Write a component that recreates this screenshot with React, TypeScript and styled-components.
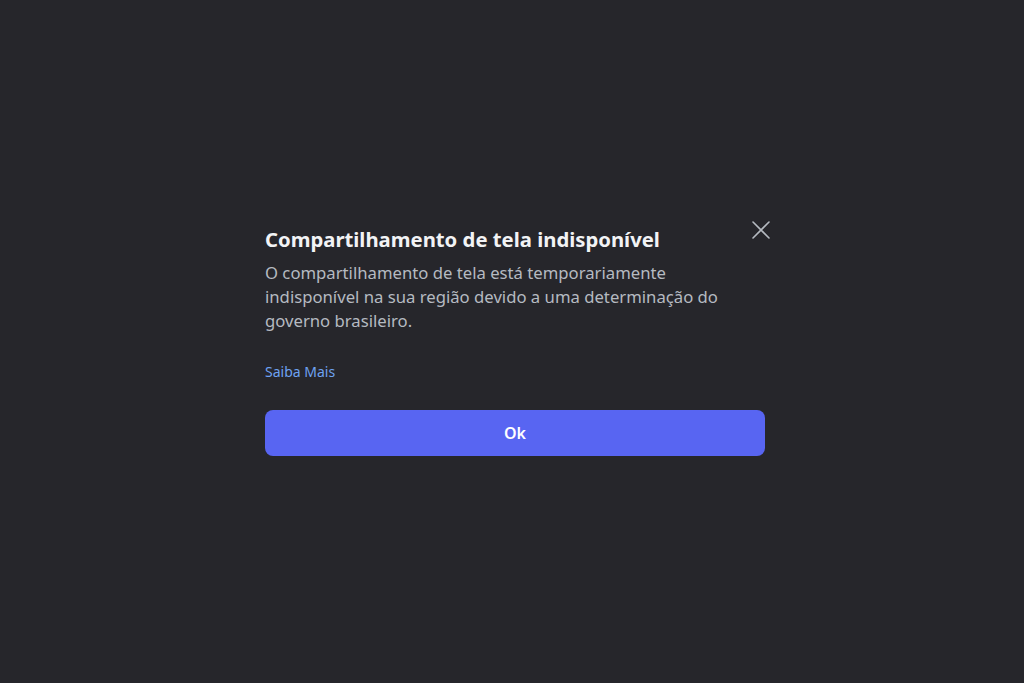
import React from "react";
import styled, { createGlobalStyle } from "styled-components";

const Global = createGlobalStyle`
  html, body {
    margin: 0;
    padding: 0;
    height: 100%;
    background: #26262b;
  }
  #root {
    height: 100%;
  }
`;

const Page = styled.div`
  height: 100vh;
  display: flex;
  align-items: center;
  justify-content: center;
  font-family: "Noto Sans", "Open Sans", sans-serif;
`;

const Modal = styled.div`
  width: 500px;
  margin-left: 6px;
  display: flex;
  flex-direction: column;
`;

const Header = styled.div`
  display: flex;
  justify-content: space-between;
  align-items: flex-start;
`;

const Title = styled.h1`
  margin: 0;
  font-size: 20.3px;
  line-height: 24px;
  font-weight: 700;
  color: #f2f3f5;
`;

const Close = styled.button`
  background: transparent;
  border: none;
  padding: 0;
  margin: -9px -8px 0 0;
  width: 24px;
  height: 24px;
  display: flex;
  align-items: center;
  justify-content: center;
  color: #b5bac1;
  cursor: pointer;
`;

const Body = styled.p`
  margin: 10px 0 0;
  max-width: 470px;
  font-size: 16.7px;
  line-height: 24px;
  color: #b5bac1;
`;

const Link = styled.a`
  margin-top: 29px;
  font-size: 14px;
  line-height: 20px;
  color: #6ea2f2;
  text-decoration: none;
  cursor: pointer;
`;

const Button = styled.button`
  margin-top: 28px;
  height: 46px;
  border: none;
  border-radius: 8px;
  background: #5865f2;
  color: #ffffff;
  font-family: inherit;
  font-size: 16px;
  font-weight: 600;
  cursor: pointer;
`;

const App = () => {
  return (
    <>
      <Global />
      <Page>
        <Modal>
          <Header>
            <Title>Compartilhamento de tela indisponível</Title>
            <Close aria-label="Fechar">
              <svg width="20" height="20" viewBox="0 0 20 20" fill="none">
                <path d="M2 2L18 18M18 2L2 18" stroke="currentColor" strokeWidth="1.6" strokeLinecap="round" />
              </svg>
            </Close>
          </Header>
          <Body>
            O compartilhamento de tela está temporariamente indisponível na sua
            região devido a uma determinação do governo brasileiro.
          </Body>
          <Link>Saiba Mais</Link>
          <Button>Ok</Button>
        </Modal>
      </Page>
    </>
  );
};

export default App;
